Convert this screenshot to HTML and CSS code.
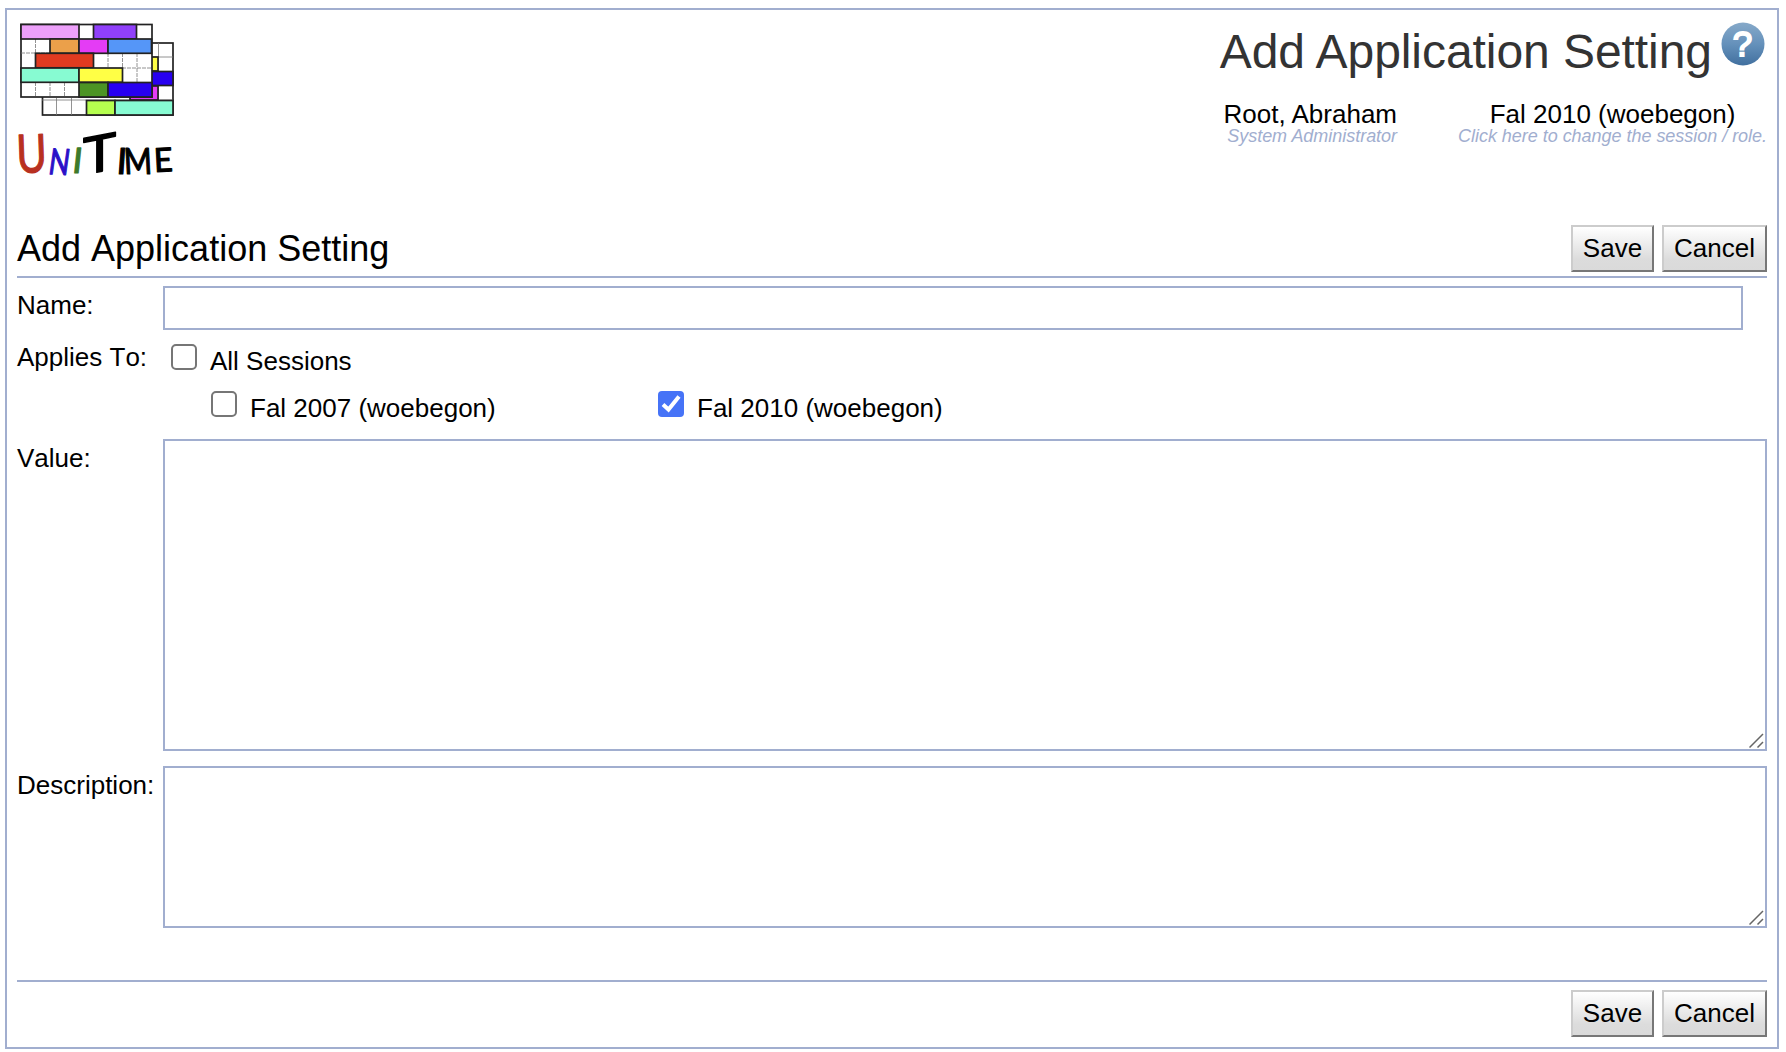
FILE: index.html
```html
<!DOCTYPE html>
<html lang="en">
<head>
<meta charset="utf-8">
<title>Add Application Setting</title>
<link rel="stylesheet" href="styles.css">
</head>
<body>
<div class="page">
  <header class="header">
    <svg class="logo" viewBox="17 20 160 160" role="img" aria-label="UniTime">
      <g stroke="#222" stroke-width="1.7">
        <rect x="42.500" y="43" width="130.500" height="72" fill="#fff"/>
        <path d="M158.500 43V115M56.500 98V115M71.500 98V115M152 57H173M42 100H173" stroke="#777" stroke-width=".8" fill="none"/>
        <rect x="145" y="57" width="13" height="14" fill="#ffff45"/>
        <rect x="145" y="71.500" width="28" height="14" fill="#2800f0"/>
        <rect x="130" y="86" width="28" height="14" fill="#e43cf5"/>
        <rect x="86.500" y="100.500" width="28.500" height="14.500" fill="#b6ff4f"/>
        <rect x="115" y="100.500" width="58" height="14.500" fill="#87fbd2"/>
        <rect x="21" y="24.500" width="131" height="72.500" fill="#fff"/>
        <path d="M35.500 39V53M21 53H50M35.500 82V97M50 82V97M64.500 82V97M108 53V68M122.500 53V82M137 53V82M122 68H152" stroke="#777" stroke-width=".8" fill="none" stroke-dasharray="4 1"/>
        <rect x="21" y="24.500" width="58" height="14.500" fill="#eda0fa"/>
        <rect x="93.500" y="24.500" width="43" height="14.500" fill="#9040fa"/>
        <rect x="50" y="39" width="29" height="14.300" fill="#eba04a"/>
        <rect x="79" y="39" width="29" height="14.300" fill="#e43cf5"/>
        <rect x="108" y="39" width="43.500" height="14.300" fill="#5596f8"/>
        <rect x="35.500" y="53.300" width="58" height="14.500" fill="#e03b20"/>
        <rect x="21" y="68" width="58" height="14.300" fill="#87fbd2"/>
        <rect x="79" y="68" width="43.500" height="14.300" fill="#ffff45"/>
        <rect x="79" y="82.500" width="29" height="14.500" fill="#4c9424"/>
        <rect x="108" y="82.500" width="44" height="14.500" fill="#2800f0"/>
      </g>
      <g class="wordmark">
        <text class="w-u" transform="translate(17 173) rotate(-2) scale(.78 1)" font-size="53">U</text>
        <text class="w-n" transform="translate(47.500 174) rotate(3) skewX(-5) scale(.75 1)" font-size="36">N</text>
        <text class="w-i" transform="translate(71.500 173) skewX(-6)" font-size="35">I</text>
        <text class="w-t" transform="translate(83 175) skewY(-11) scale(1.100 1)" font-size="51">T</text>
        <text class="w-k" transform="translate(116 174) skewX(-4)" font-size="36">I</text>
        <text class="w-k" transform="translate(124.500 174) skewX(3) scale(.84 1)" font-size="36">M</text>
        <text class="w-k" transform="translate(154.500 172) rotate(-3) scale(.980 1)" font-size="33">E</text>
      </g>
    </svg>
    <div class="header-info">
      <div class="title-row">
        <h1 class="title">Add Application Setting</h1>
        <svg class="help" viewBox="0 0 44 44" role="img" aria-label="Help">
          <defs><linearGradient id="ball" x2="0" y2="1"><stop stop-color="#86a9c9"/><stop offset=".5" stop-color="#6591bb"/><stop offset="1" stop-color="#41709f"/></linearGradient></defs>
          <circle cx="22" cy="22" r="21.500" fill="url(#ball)"/>
          <text x="21.500" y="34" text-anchor="middle">?</text>
        </svg>
      </div>
      <div class="who">
        <div class="user"><div>Root, Abraham</div><div class="hint">System Administrator</div></div>
        <div class="session"><div>Fal 2010 (woebegon)</div><div class="hint">Click here to change the session / role.</div></div>
      </div>
    </div>
  </header>

  <div class="section-head">
    <h2 class="section-title">Add Application Setting</h2>
    <div class="buttons"><button class="btn save">Save</button><button class="btn cancel">Cancel</button></div>
  </div>

  <form class="form">
    <label class="label" for="name">Name:</label>
    <input class="field name" id="name" type="text">
    <span class="label applies">Applies To:</span>
    <div class="sessions">
      <label class="check"><input type="checkbox"><span>All Sessions</span></label>
      <div class="session-list">
        <label class="check"><input type="checkbox"><span>Fal 2007 (woebegon)</span></label>
        <label class="check"><input type="checkbox" checked><span>Fal 2010 (woebegon)</span></label>
      </div>
    </div>
    <label class="label" for="value">Value:</label>
    <div class="area value"><textarea class="field" id="value"></textarea>
      <svg class="grip" viewBox="0 0 15 15"><path d="M.5 14.500L14 1M8.500 14.500L14 9"/></svg></div>
    <label class="label" for="desc">Description:</label>
    <div class="area desc"><textarea class="field" id="desc"></textarea>
      <svg class="grip" viewBox="0 0 15 15"><path d="M.5 14.500L14 1M8.500 14.500L14 9"/></svg></div>
  </form>

  <div class="footer">
    <div class="buttons"><button class="btn save">Save</button><button class="btn cancel">Cancel</button></div>
  </div>
</div>
</body>
</html>
```
FILE: styles.css
```css
* { box-sizing: border-box; }
body {
  margin: 0;
  padding: 8px 7px 0 5px;
  background: #fff;
  color: #000;
  font: 26px/30px "Liberation Sans", Arial, sans-serif;
  font-kerning: none;
}
.page {
  height: 1041px;
  padding: 10px;
  border: 2px solid #a1aecf;
}
.header {
  display: flex;
  justify-content: space-between;
  height: 205px;
}
.logo { width: 160px; height: 160px; overflow: visible; }
.wordmark {
  font-family: Lato, sans-serif;
  font-weight: 400;
  stroke-linejoin: round;
  stroke-width: 1.2px;
}
.w-u { fill: #b83020; stroke: #b83020; }
.w-n { fill: #2b10c8; stroke: #2b10c8; }
.w-i { fill: #3d7a2a; stroke: #3d7a2a; }
.w-t { fill: #000; stroke: #000; stroke-width: 1.5px; }
.w-k { fill: #000; stroke: #000; }
.header-info { white-space: nowrap; font-kerning: normal; }
.title-row { display: flex; justify-content: flex-end; padding: 2px 2px 0 0; }
.title {
  margin: 2px 9px 0 0;
  color: #333;
  font-size: 48px;
  font-weight: 400;
  letter-spacing: -.06px;
  line-height: 56px;
}
.help { width: 44px; height: 44px; }
.help text { fill: #fff; stroke: #fff; font: 35px "Liberation Sans", Arial, sans-serif; stroke-width: 1.8px; }
.who { display: flex; justify-content: flex-end; gap: 61px; padding-top: 19px; line-height: 30px; }
.user { text-align: right; }
.session { text-align: center; }
.hint { margin-top: -4px; color: #a1aecf; font-size: 18px; font-style: italic; letter-spacing: -.03px; line-height: 22px; }
.section-head {
  display: flex;
  align-items: flex-start;
  justify-content: space-between;
  height: 53px;
  border-bottom: 2px solid #a1aecf;
}
.section-title { margin: 4px 0 0; font-size: 36px; font-weight: 400; line-height: 40px; }
.buttons { display: flex; gap: 8px; }
.btn {
  height: 47px;
  padding: 0;
  border: 2px solid;
  border-color: #ccc #777 #777 #ccc;
  border-radius: 0;
  background: linear-gradient(#fff, #dcdcdc 75%, #dadada);
  color: #000;
  font: 26px "Liberation Sans", Arial, sans-serif;
}
.save { width: 83px; }
.cancel { width: 105px; }
.form {
  display: grid;
  grid-template-columns: 146px 1fr;
  grid-template-rows: 44px 109px 312px 15px 162px;
  padding-top: 8px;
}
.label { padding-top: 4px; }
.field { display: block; margin: 0; border: 2px solid #a1aecf; border-radius: 0; background: #fff; outline: 0; font: inherit; }
.name { width: 1580px; height: 44px; }
.applies { padding-top: 12px; }
.sessions { padding: 14px 0 0 8px; }
.check { display: flex; gap: 13px; }
.check span { padding-top: 2px; }
.check input {
  appearance: none;
  width: 26px;
  height: 26px;
  margin: 0;
  border: 2px solid #767676;
  border-radius: 5px;
  background: #fff;
}
.check input:checked {
  border: 0;
  border-radius: 4px;
  background: #4673f7 url("data:image/svg+xml,%3Csvg xmlns='http://www.w3.org/2000/svg' viewBox='0 0 26 26'%3E%3Cpath d='M5 13.500L10.500 18.500L21 5.500' fill='none' stroke='white' stroke-width='4'/%3E%3C/svg%3E");
}
.session-list { display: grid; grid-template-columns: 447px auto; padding: 15px 0 0 40px; }
.area { position: relative; }
.area .field { width: 100%; height: 100%; resize: none; }
.value { grid-row: 3; }
.form label[for="value"] { grid-row: 3; padding-top: 4px; }
.desc, .form label[for="desc"] { grid-row: 5; }
.grip { position: absolute; right: 3px; bottom: 3px; width: 15px; height: 15px; fill: none; stroke: #666; stroke-width: 1.5; }
.footer {
  display: flex;
  justify-content: flex-end;
  margin-top: 52px;
  padding-top: 8px;
  border-top: 2px solid #a1aecf;
}
```
